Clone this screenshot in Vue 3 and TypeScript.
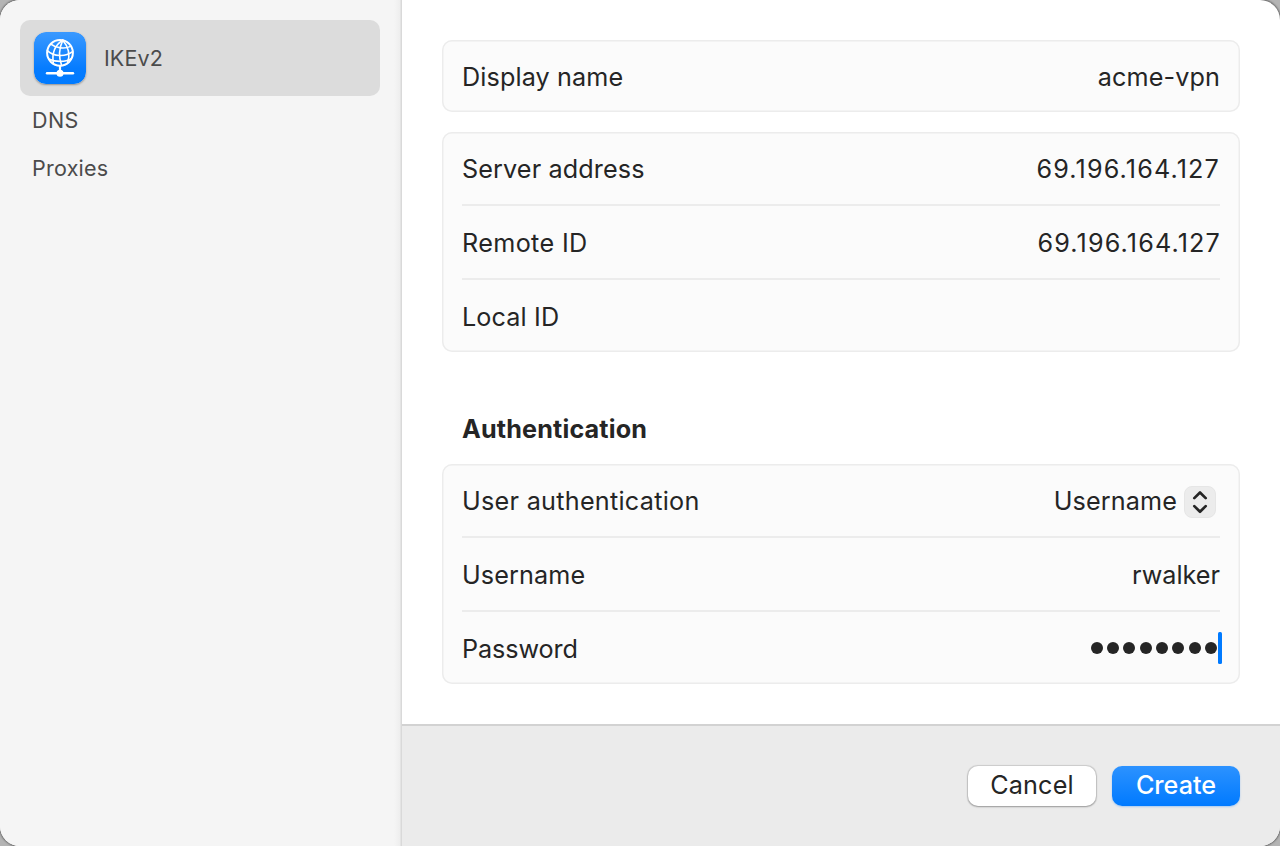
<script setup lang="ts">
interface Row {
  key: string
  label: string
  value?: string
  kind?: 'text' | 'select' | 'password'
}

const identity: Row[] = [{ key: 'display', label: 'Display name', value: 'acme-vpn' }]
const server: Row[] = [
  { key: 'server', label: 'Server address', value: '69.196.164.127' },
  { key: 'remote', label: 'Remote ID', value: '69.196.164.127' },
  { key: 'local', label: 'Local ID' },
]
const auth: Row[] = [
  { key: 'method', label: 'User authentication', value: 'Username', kind: 'select' },
  { key: 'user', label: 'Username', value: 'rwalker' },
  { key: 'password', label: 'Password', kind: 'password' },
]
const groups = [
  { key: 'identity', title: '', rows: identity },
  { key: 'server', title: '', rows: server },
  { key: 'auth', title: 'Authentication', rows: auth },
]
const dots = 8
</script>

<template>
  <div class="backdrop">
    <div class="dialog">
      <nav class="sidebar">
        <div class="item selected">
          <svg class="app-icon" viewBox="0 0 52 52" width="52" height="52">
            <defs>
              <linearGradient id="tile" x1="0" y1="0" x2="0" y2="1">
                <stop offset="0" stop-color="#3a99ff" />
                <stop offset="0.7" stop-color="#067cff" />
                <stop offset="1" stop-color="#007aff" />
              </linearGradient>
            </defs>
            <rect width="52" height="52" rx="12" fill="url(#tile)" />
            <g fill="none" stroke="#fff" stroke-width="1.6" stroke-linecap="round">
              <circle cx="26" cy="20.8" r="12.9" stroke-width="2" />
              <path d="M28.8 8.2C22.2 12.4 17.6 20.2 19.3 31.2" />
              <path d="M28.8 8.2C25.4 15.5 24.6 25.2 27.6 33.4" />
              <path d="M28.8 8.2C34.2 14.5 36.4 22.2 33.6 30.4" />
              <path d="M16.8 12.2C22 16.2 30.6 17.2 36.6 14.4" />
              <path d="M13.4 18.6C19.5 24.6 31.5 25.2 38.6 19.6" />
              <path d="M15.4 27.2C21.5 30.2 31.7 30.2 36.8 26.8" />
              <path d="M26 34v6" stroke-width="2.2" />
              <path d="M13 41.2h26" stroke-width="2.4" />
            </g>
            <circle cx="26" cy="41.2" r="3.5" fill="#fff" />
          </svg>
          <span class="ike">IKEv2</span>
        </div>
        <div class="item"><span class="dns">DNS</span></div>
        <div class="item"><span class="proxies">Proxies</span></div>
      </nav>
      <div class="main">
        <form class="content" @submit.prevent>
          <section v-for="group in groups" :key="group.key" :class="'group-' + group.key">
            <h2 v-if="group.title"><span>{{ group.title }}</span></h2>
            <div class="card">
              <div v-for="row in group.rows" :key="row.key" class="row" :class="'row-' + row.key">
                <span class="label">{{ row.label }}</span>
                <span v-if="row.kind === 'password'" class="password">
                  <i v-for="n in dots" :key="n" class="dot"></i><i class="caret"></i>
                </span>
                <span v-else-if="row.kind === 'select'" class="select">
                  <span class="value">{{ row.value }}</span>
                  <svg width="32" height="32" viewBox="0 0 32 32">
                    <rect x=".5" y=".5" width="31" height="31" rx="7.5" fill="#ececec" stroke="#e6e6e6" />
                    <path
                      d="M10.3 12.1 16 6.5l5.7 5.6M10.3 20.1l5.7 5.6 5.7-5.6"
                      fill="none"
                      stroke="#252525"
                      stroke-width="2.7"
                      stroke-linecap="round"
                      stroke-linejoin="round"
                    />
                  </svg>
                </span>
                <span v-else class="value">{{ row.value }}</span>
              </div>
            </div>
          </section>
        </form>
        <footer>
          <button type="button" class="cancel"><span>Cancel</span></button>
          <button type="button" class="create"><span>Create</span></button>
        </footer>
      </div>
    </div>
  </div>
</template>

<style>
body {
  background: #b4b4b4;
}
</style>

<style scoped>
.backdrop {
  height: 846px;
  overflow: hidden;
  background: #b4b4b4;
  font-family: Inter, 'Liberation Sans', sans-serif;
  color: #252525;
}
.dialog {
  display: flex;
  height: 846px;
  border-radius: 20px;
  overflow: hidden;
  background: #fff;
  box-shadow: 0 0 2px 1px rgba(0, 0, 0, 0.45);
}
.sidebar {
  box-sizing: border-box;
  width: 402px;
  padding: 20px 22px 0 20px;
  background: linear-gradient(to right, #f5f5f5 394px, #eeeeee 400px, #e4e4e4 400px, #e4e4e4 401px, #d9d9d9 401px);
  color: #4b4b4b;
  font-size: 21.5px;
}
.item {
  display: flex;
  align-items: center;
  height: 48px;
  padding-left: 12px;
}
.item.selected {
  height: 76px;
  padding-left: 14px;
  gap: 18px;
  border-radius: 10px;
  background: #dcdcdc;
}
.app-icon {
  border-radius: 12px;
  box-shadow: 0 1px 2px rgba(0, 0, 0, 0.35);
}
.ike {
  letter-spacing: 0.1px;
}
.dns {
  letter-spacing: 0.4px;
}
.proxies {
  letter-spacing: 0.25px;
}
.main {
  flex: 1;
  display: flex;
  flex-direction: column;
  font-size: 25.2px;
}
.content {
  box-sizing: border-box;
  height: 724px;
  padding: 40px 40px 0;
}
.group-server {
  margin-top: 20px;
}
h2 {
  display: flex;
  align-items: center;
  height: 34px;
  margin: 60px 0 18px;
  padding-left: 20px;
  font-size: 25.2px;
  font-weight: 650;
  letter-spacing: 0.15px;
}
.card {
  border-radius: 10px;
  background: #fbfbfb;
  box-shadow: inset 0 0 0 1.5px #ececec;
  padding: 0 20px;
}
.row {
  display: flex;
  justify-content: space-between;
  align-items: center;
  height: 72px;
  padding-top: 2px;
  box-sizing: border-box;
}
.row + .row {
  height: 74px;
  border-top: 2px solid #ececec;
}
.label {
  letter-spacing: 0.12px;
}
.row-remote .label {
  letter-spacing: 0.35px;
}
.row-method .label {
  letter-spacing: 0.27px;
}
.row-password .label {
  letter-spacing: -0.1px;
}
.row-display .value,
.row-method .value {
  letter-spacing: 0.12px;
}
.row-server .value,
.row-remote .value {
  letter-spacing: 1.14px;
  margin-right: -1px;
}
.row-server .value {
  margin-right: 0;
}
.select {
  display: flex;
  align-items: center;
  gap: 7px;
  margin-right: 4px;
}
.select svg {
  margin: 1px 0 -1px;
}
.password {
  display: flex;
  align-items: center;
  gap: 4.3px;
  margin: -2px -2px 0 0;
}
.dot {
  width: 12px;
  height: 12px;
  border-radius: 50%;
  background: #252525;
}
.caret {
  width: 4px;
  height: 32px;
  margin-left: -3.2px;
  border-radius: 1.5px;
  background: #007aff;
}
footer {
  flex: 1;
  display: flex;
  align-items: flex-start;
  justify-content: flex-end;
  gap: 16px;
  padding: 40px 40px 0;
  border-top: 2px solid #d2d2d2;
  background: #ebebeb;
}
button {
  width: 128px;
  height: 40px;
  padding: 0 0 2px;
  border: 0;
  border-radius: 10px;
  background: #fff;
  color: #252525;
  font: inherit;
  box-shadow: 0 0 1px 0.5px rgba(0, 0, 0, 0.13), 0 1px 2px rgba(0, 0, 0, 0.25);
}
.cancel {
  letter-spacing: 0.15px;
}
.create {
  background: linear-gradient(#2c92ff, #007aff);
  color: #fff;
  font-weight: 500;
  box-shadow: 0 1px 2px rgba(0, 122, 255, 0.3);
}
</style>
